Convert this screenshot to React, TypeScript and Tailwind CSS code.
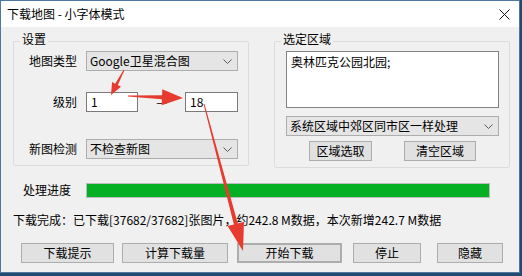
import type { ReactNode } from "react"

const RED = "#e63b2e"

// tapered arrow: thin at the tail, fat head at the tip
function arrowPoints(x1: number, y1: number, x2: number, y2: number, w0: number, w1: number, hl: number, hw: number) {
  const dx = x2 - x1
  const dy = y2 - y1
  const len = Math.sqrt(dx * dx + dy * dy)
  const ux = dx / len
  const uy = dy / len
  const nx = -uy
  const ny = ux
  const bx = x2 - ux * hl
  const by = y2 - uy * hl
  const pts = [
    [x1 + (nx * w0) / 2, y1 + (ny * w0) / 2],
    [bx + (nx * w1) / 2, by + (ny * w1) / 2],
    [bx + (nx * hw) / 2, by + (ny * hw) / 2],
    [x2, y2],
    [bx - (nx * hw) / 2, by - (ny * hw) / 2],
    [bx - (nx * w1) / 2, by - (ny * w1) / 2],
    [x1 - (nx * w0) / 2, y1 - (ny * w0) / 2],
  ]
  return pts.map((p) => p[0].toFixed(1) + "," + p[1].toFixed(1)).join(" ")
}

function Chevron() {
  return (
    <svg width="9" height="5" viewBox="0 0 9 5">
      <path d="M0.5 0.5 L4.5 4.5 L8.5 0.5" fill="none" stroke="#5a5a5a" strokeWidth="1" />
    </svg>
  )
}

function Combo({ text, className }: { text: string; className: string }) {
  return (
    <div className={"h-[20px] border border-[#adadad] bg-[#e5e5e5] flex items-center justify-between pl-[3px] pr-[5px] " + className}>
      <span>{text}</span>
      <Chevron />
    </div>
  )
}

function Btn({ children, className }: { children: ReactNode; className: string }) {
  return (
    <div className={"h-[20px] border border-[#adadad] bg-[#e1e1e1] flex items-center justify-center " + className}>
      {children}
    </div>
  )
}

function GroupBox({ title, className, children }: { title: string; className: string; children: ReactNode }) {
  return (
    <div className={"relative border border-[#dcdcdc] rounded-[2px] " + className}>
      <span className="absolute -top-[11px] left-[6px] bg-[#f0f0f0] px-[2px] leading-[16px]">{title}</span>
      {children}
    </div>
  )
}

export default function App() {
  return (
    <div className="w-[522px] h-[276px] bg-[#214a70] relative overflow-hidden font-['Noto_Sans_CJK_SC',sans-serif] text-[12px] leading-[16px] text-black">
      <div className="w-[520px] h-[273px] border border-[#4f77a0] flex flex-col">
        <div className="h-[26px] bg-white flex items-center justify-between pl-[6px] pr-[9px]">
          <span>下载地图 - 小字体模式</span>
          <svg width="11" height="11" viewBox="0 0 11 11">
            <path d="M0.5 0.5 L10.5 10.5 M10.5 0.5 L0.5 10.5" stroke="#111" strokeWidth="1" />
          </svg>
        </div>

        <div className="flex-1 bg-[#f0f0f0] pl-[12px]">
          <div className="mt-[14px] flex items-start gap-[25px]">
            <GroupBox title="设置" className="w-[236px] h-[125px] pt-[9px]">
              <div className="flex items-center">
                <div className="w-[72px] text-right pr-[9px]">地图类型</div>
                <Combo text="Google卫星混合图" className="w-[152px]" />
              </div>
              <div className="flex items-center mt-[21px]">
                <div className="w-[72px] text-right pr-[9px]">级别</div>
                <div className="w-[52px] h-[20px] border border-[#7a7a7a] bg-white pl-[4px] flex items-center">1</div>
                <div className="w-[47px] text-center">—</div>
                <div className="w-[53px] h-[20px] border border-[#7a7a7a] bg-white pl-[4px] flex items-center">18</div>
              </div>
              <div className="flex items-center mt-[27px]">
                <div className="w-[72px] text-right pr-[9px]">新图检测</div>
                <Combo text="不检查新图" className="w-[152px]" />
              </div>
            </GroupBox>

            <GroupBox title="选定区域" className="w-[236px] h-[127px] pt-[9px] pl-[11px]">
              <div className="w-[213px] h-[57px] border border-[#828282] bg-white pl-[4px] pt-[2px]">奥林匹克公园北园;</div>
              <Combo text="系统区域中郊区同市区一样处理" className="w-[213px] mt-[8px]" />
              <div className="flex mt-[5px]">
                <Btn className="w-[63px] ml-[23px]">区域选取</Btn>
                <Btn className="w-[72px] ml-[32px]">清空区域</Btn>
              </div>
            </GroupBox>
          </div>

          <div className="mt-[14px] flex items-center">
            <div className="w-[73px] pl-[10px]">处理进度</div>
            <div className="w-[404px] h-[15px] border border-[#bcbcbc] bg-[#e6e6e6]">
              <div className="h-full bg-[#06b025]" style={{ width: "100%" }} />
            </div>
          </div>

          <div className="mt-[14px]">下载完成：已下载[37682/37682]张图片，约242.8 M数据，本次新增242.7 M数据</div>

          <div className="mt-[15px] flex">
            <Btn className="w-[93px] ml-[8px]">下载提示</Btn>
            <Btn className="w-[106px] ml-[8px]">计算下载量</Btn>
            <Btn className="w-[105px] ml-[9px] border-2 border-[#0078d7]">开始下载</Btn>
            <Btn className="w-[68px] ml-[11px]">停止</Btn>
            <Btn className="w-[66px] ml-[16px]">隐藏</Btn>
          </div>
        </div>
      </div>

      <svg className="absolute inset-0 pointer-events-none" width="522" height="276" viewBox="0 0 522 276">
        <polygon fill={RED} points={arrowPoints(124, 70, 111, 95, 1, 3, 12, 10)} />
        <polygon fill={RED} points={arrowPoints(128, 96, 183, 98, 1, 4, 21, 16)} />
        <polygon fill={RED} points={arrowPoints(204, 104, 243, 251, 1, 4, 28, 17)} />
      </svg>
    </div>
  )
}
